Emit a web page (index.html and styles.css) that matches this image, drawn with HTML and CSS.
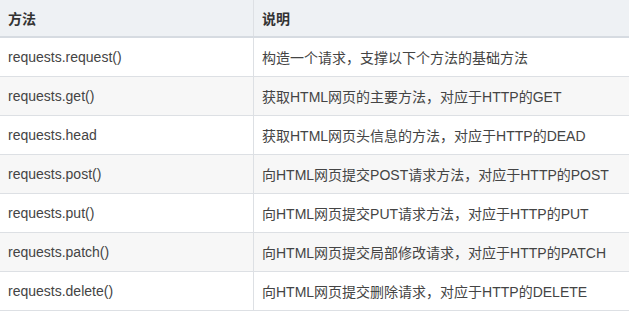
FILE: index.html
```html
<!DOCTYPE html>
<html lang="zh-CN">
<head>
<meta charset="utf-8">
<title>requests 方法</title>
<link rel="stylesheet" href="styles.css">
</head>
<body>
<table class="methods">
  <thead>
    <tr><th class="col-name">方法</th><th>说明</th></tr>
  </thead>
  <tbody>
    <tr><td>requests.request()</td><td>构造一个请求，支撑以下个方法的基础方法</td></tr>
    <tr><td>requests.get()</td><td>获取HTML网页的主要方法，对应于HTTP的GET</td></tr>
    <tr><td>requests.head</td><td>获取HTML网页头信息的方法，对应于HTTP的DEAD</td></tr>
    <tr><td>requests.post()</td><td>向HTML网页提交POST请求方法，对应于HTTP的POST</td></tr>
    <tr><td>requests.put()</td><td>向HTML网页提交PUT请求方法，对应于HTTP的PUT</td></tr>
    <tr><td>requests.patch()</td><td>向HTML网页提交局部修改请求，对应于HTTP的PATCH</td></tr>
    <tr><td>requests.delete()</td><td>向HTML网页提交删除请求，对应于HTTP的DELETE</td></tr>
  </tbody>
</table>
</body>
</html>
```
FILE: styles.css
```css
html, body {
  margin: 0;
  padding: 0;
  background: #ffffff;
}
.methods {
  border-collapse: collapse;
  width: 640px;
  table-layout: fixed;
  font-family: "Liberation Sans", "Noto Sans CJK SC", sans-serif;
  font-size: 14px;
  color: #444;
}
.methods th,
.methods td {
  text-align: left;
  padding: 0 8px;
  border: 1px solid #dde0e4;
  white-space: nowrap;
}
.methods tr > :first-child { border-left: none; }
.methods th {
  height: 36px;
  background: #eef1f4;
  font-weight: bold;
  color: #333;
  border-top: none;
  border-bottom: 2px solid #d6dbe1;
}
.methods .col-name { width: 237px; }
.methods td {
  height: 38px;
}
.methods tbody tr:nth-child(even) td {
  background: #f7f7f7;
}
```
